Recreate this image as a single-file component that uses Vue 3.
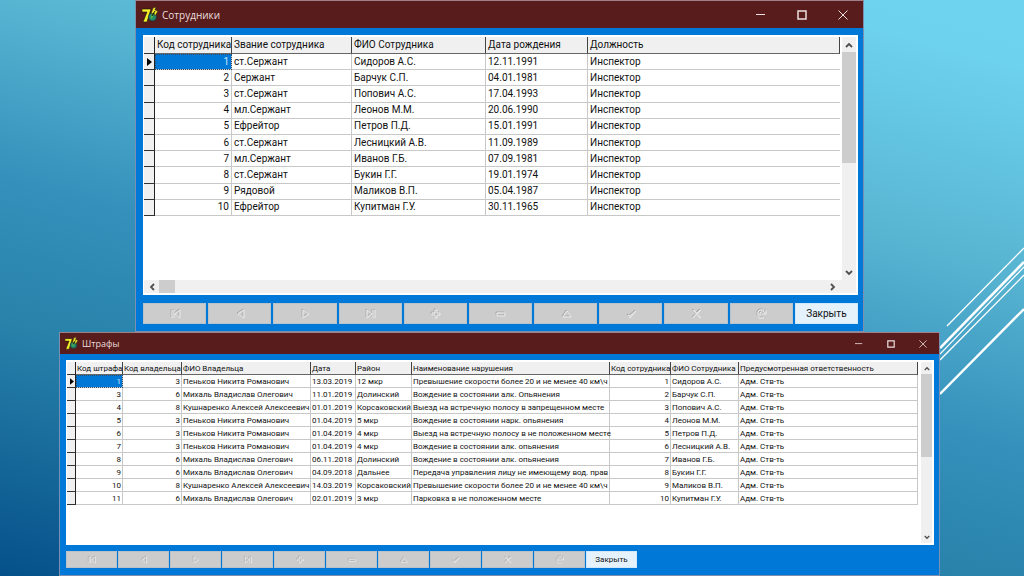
<script setup>
const navIcons = [
  { name: 'Первая запись', d: 'M3 1V9M5 1V9M11 1L6 5L11 9Z' },
  { name: 'Предыдущая запись', d: 'M10 1L4 5L10 9Z' },
  { name: 'Следующая запись', d: 'M4 1L10 5L4 9Z' },
  { name: 'Последняя запись', d: 'M3 1L8 5L3 9ZM9 1V9M11 1V9' },
  { name: 'Добавить', d: 'M6 1H8V4H11V6H8V9H6V6H3V4H6Z' },
  { name: 'Удалить', d: 'M3 4H11V7H3Z' },
  { name: 'Изменить', d: 'M7 2L11 8H3Z' },
  { name: 'Сохранить', d: 'M3 6L5 9L11 2L5 7Z' },
  { name: 'Отменить', d: 'M3 1L10 9M4 1L11 9M10 1L3 9M11 1L7 5' },
  { name: 'Обновить', d: 'M9 9H4L3 7V3L5 1H9M11 1V5H7M11 5L8 2M5 7V4L7 3' },
]

const ranks = [
  ['1', 'ст.Сержант', 'Сидоров А.С.', '12.11.1991', 'Инспектор'],
  ['2', 'Сержант', 'Барчук С.П.', '04.01.1981', 'Инспектор'],
  ['3', 'ст.Сержант', 'Попович А.С.', '17.04.1993', 'Инспектор'],
  ['4', 'мл.Сержант', 'Леонов М.М.', '20.06.1990', 'Инспектор'],
  ['5', 'Ефрейтор', 'Петров П.Д.', '15.01.1991', 'Инспектор'],
  ['6', 'ст.Сержант', 'Лесницкий А.В.', '11.09.1989', 'Инспектор'],
  ['7', 'мл.Сержант', 'Иванов Г.Б.', '07.09.1981', 'Инспектор'],
  ['8', 'ст.Сержант', 'Букин Г.Г.', '19.01.1974', 'Инспектор'],
  ['9', 'Рядовой', 'Маликов В.П.', '05.04.1987', 'Инспектор'],
  ['10', 'Ефрейтор', 'Купитман Г.У.', '30.11.1965', 'Инспектор'],
]

const penkov = 'Пеньков Никита Романович'
const mikhal = 'Михаль Владислав Олегович'
const kushnarenko = 'Кушнаренко Алексей Алексеевич'
const liability = 'Адм. Ств-ть'
const fines = [
  ['1', '3', penkov, '13.03.2019', '12 мкр', 'Превышение скорости более 20 и не менее 40 км\\ч', '1', 'Сидоров А.С.', liability],
  ['3', '6', mikhal, '11.01.2019', 'Долинский', 'Вождение в состоянии алк. Опьянения', '2', 'Барчук С.П.', liability],
  ['4', '8', kushnarenko, '01.01.2019', 'Корсаковский', 'Выезд на встречную полосу в запрещенном месте', '3', 'Попович А.С.', liability],
  ['5', '3', penkov, '01.04.2019', '5 мкр', 'Вождение в состоянии нарк. опьянения', '4', 'Леонов М.М.', liability],
  ['6', '3', penkov, '01.04.2019', '4 мкр', 'Выезд на встречную полосу в не положенном месте', '5', 'Петров П.Д.', liability],
  ['7', '3', penkov, '01.04.2019', '4 мкр', 'Вождение в состоянии алк. опьянения', '6', 'Лесницкий А.В.', liability],
  ['8', '6', mikhal, '06.11.2018', 'Долинский', 'Вождение в состоянии алк. опьянения', '7', 'Иванов Г.Б.', liability],
  ['9', '6', mikhal, '04.09.2018', 'Дальнее', 'Передача управления лицу не имеющему вод. прав', '8', 'Букин Г.Г.', liability],
  ['10', '8', kushnarenko, '14.03.2019', 'Корсаковский', 'Превышение скорости более 20 и не менее 40 км\\ч', '9', 'Маликов В.П.', liability],
  ['11', '6', mikhal, '02.01.2019', '3 мкр', 'Парковка в не положенном месте', '10', 'Купитман Г.У.', liability],
]

const windows = [
  {
    id: 'staff',
    title: 'Сотрудники',
    heads: ['Код сотрудника', 'Звание сотрудника', 'ФИО Сотрудника', 'Дата рождения', 'Должность'],
    numeric: [0],
    rows: ranks,
    horizontal: true,
  },
  {
    id: 'fines',
    title: 'Штрафы',
    heads: ['Код штрафа', 'Код владельца', 'ФИО Владельца', 'Дата', 'Район', 'Наименование нарушения', 'Код сотрудника', 'ФИО Сотрудника', 'Предусмотренная ответственность'],
    numeric: [0, 1, 6],
    rows: fines,
    horizontal: false,
  },
]
</script>

<template>
  <main class="desktop">
    <svg class="rays" viewBox="0 0 84 150" aria-hidden="true">
      <g fill="none" stroke="#fff">
        <path d="M84 3L7 81" stroke-width="1.3" />
        <path d="M84 17L0 103" stroke-width="2.6" />
        <path d="M84 22L0 109" stroke-width="1.2" />
        <path d="M84 30L0 115" stroke-width="1.3" />
        <path d="M84 64L0 149" stroke-width="2.4" />
      </g>
    </svg>

    <section v-for="w in windows" :key="w.id" class="window" :class="w.id">
      <header class="titlebar">
        <svg class="logo" viewBox="0 0 16 16" aria-hidden="true">
          <path d="M0 2H9L8 5L5 15H1L5 5H0Z" fill="#f5ef2a" stroke="#16160a" stroke-width=".6" />
          <circle cx="10.5" cy="10" r="4" fill="#268b68" stroke="#123" stroke-width=".6" />
          <path d="M9 8L11 7L11 10L9 12Z" fill="#58b648" />
          <path d="M9 7L11 1L14 0L13 3L16 4L13 9L12 6Z" fill="#f1e92c" stroke="#20200b" stroke-width=".5" />
          <path d="M10 9L13 4" stroke="#111" stroke-width="1" />
        </svg>
        <h1>{{ w.title }}</h1>
        <div class="controls">
          <button type="button" aria-label="Свернуть"><svg viewBox="0 0 10 10"><path d="M0 4.5H9" /></svg></button>
          <button type="button" aria-label="Развернуть"><svg viewBox="0 0 10 10"><path class="bold" d="M1 1H9V9H1Z" /></svg></button>
          <button type="button" aria-label="Закрыть окно"><svg viewBox="0 0 10 10"><path d="M.5.5L9.5 9.5M9.5.5L.5 9.5" /></svg></button>
        </div>
      </header>

      <div class="client">
        <div class="grid">
          <div class="body">
            <div class="sheet">
              <table>
                <colgroup>
                  <col class="mark" />
                  <col v-for="(h, i) in w.heads" :key="h" :class="'c' + i" />
                </colgroup>
                <thead>
                  <tr>
                    <td class="marker"></td>
                    <th v-for="h in w.heads" :key="h" scope="col">{{ h }}</th>
                  </tr>
                </thead>
                <tbody>
                  <tr v-for="(row, r) in w.rows" :key="row[0]">
                    <td class="marker">
                      <svg v-if="r === 0" viewBox="0 0 5 8" aria-hidden="true"><path d="M0 0L5 4L0 8Z" /></svg>
                    </td>
                    <td
                      v-for="(cell, c) in row"
                      :key="c"
                      :class="{ num: w.numeric.includes(c), selected: r === 0 && c === 0 }"
                    >{{ cell }}</td>
                  </tr>
                </tbody>
              </table>
            </div>
            <div class="vbar">
              <button type="button" aria-label="Вверх"><svg viewBox="0 0 8 6"><path d="M1 5L4 2L7 5" /></svg></button>
              <span class="thumb"></span>
              <button type="button" class="end" aria-label="Вниз"><svg viewBox="0 0 8 6"><path d="M1 1L4 4L7 1" /></svg></button>
            </div>
          </div>
          <div v-if="w.horizontal" class="hbar">
            <button type="button" aria-label="Влево"><svg viewBox="0 0 6 8"><path d="M5 1L2 4L5 7" /></svg></button>
            <span class="thumb"></span>
            <button type="button" class="end" aria-label="Вправо"><svg viewBox="0 0 6 8"><path d="M1 1L4 4L1 7" /></svg></button>
          </div>
        </div>

        <nav class="navigator">
          <button v-for="icon in navIcons" :key="icon.name" type="button" class="nav" :aria-label="icon.name" disabled>
            <svg viewBox="0 0 14 11">
              <path class="shade" :d="icon.d" />
              <path class="light" :d="icon.d" transform="translate(1 1)" />
            </svg>
          </button>
          <button type="button" class="close">Закрыть</button>
        </nav>
      </div>
    </section>
  </main>
</template>

<style>
body {
  background: #247aa8;
}
</style>

<style scoped>
* {
  box-sizing: border-box;
}
.desktop {
  position: relative;
  display: flex;
  flex-direction: column;
  min-height: 100vh;
  background: linear-gradient(195deg, #6dd3ef 0%, #6dd2ee 8%, #58b5d2 32%, #3590bb 53%, #2882aa 70%, #05508a 100%);
  font-family: Roboto, "Liberation Sans", Arial, sans-serif;
  color: #111;
}
.rays {
  position: absolute;
  right: 0;
  top: 245px;
  width: 84px;
  height: 150px;
}
.window {
  position: relative;
  display: flex;
  flex-direction: column;
  border: 1px solid #7d8fae;
  border-top-color: #a08088;
  background: #0078d7;
}
.staff {
  margin: 0 160px 0 135px;
  font-size: 10px;
}
.fines {
  flex: 1;
  margin: 0 84px 0 59px;
  font-size: 8px;
}
.titlebar {
  display: flex;
  align-items: center;
  background: #581c1c;
  color: #eadede;
}
.staff .titlebar {
  height: 27px;
  padding: 0 15px 0 6px;
}
.fines .titlebar {
  height: 21px;
  padding: 0 12px 0 5px;
}
.logo {
  width: 16px;
  height: 16px;
}
.fines .logo {
  width: 13px;
  height: 13px;
}
h1 {
  margin: 0 auto 0 4px;
  font: 400 10px "Open Sans", "Noto Sans", sans-serif;
}
.fines h1 {
  font-size: 9px;
}
button {
  display: flex;
  align-items: center;
  justify-content: center;
  margin: 0;
  padding: 0;
  border: 0;
  background: none;
  font: inherit;
  color: inherit;
}
.controls {
  display: flex;
  gap: 31px;
}
.fines .controls {
  gap: 24px;
}
.controls svg {
  display: block;
  width: 10px;
  height: 10px;
  fill: none;
  stroke: #eedede;
}
.fines .controls svg {
  width: 8px;
  height: 8px;
}
.controls .bold {
  stroke-width: 1.5;
}
.client {
  padding: 7px 5px 7px 7px;
}
.fines .client {
  padding: 6px 5px 6px 6px;
}
.grid {
  padding: 2px 2px 2px 1px;
  background: #fff;
}
.body {
  display: flex;
}
.sheet {
  flex: 1;
  min-width: 0;
  padding-right: 2px;
}
.fines .sheet {
  padding-right: 3px;
}
.staff .body {
  height: 243px;
}
.fines .body {
  height: 181px;
}
table {
  width: 100%;
  table-layout: fixed;
  border-collapse: separate;
  border-spacing: 0;
}
.staff table {
  height: 179px;
}
.fines table {
  height: 143px;
}
thead tr {
  height: 17px;
}
.fines thead tr {
  height: 13px;
}
.staff .mark { width: 11px; }
.staff .c0 { width: 77px; }
.staff .c1 { width: 120px; }
.staff .c2 { width: 134px; }
.staff .c3 { width: 102px; }
.fines .mark { width: 9px; }
.fines .c0 { width: 47px; }
.fines .c1 { width: 59px; }
.fines .c2 { width: 129px; }
.fines .c3 { width: 45px; }
.fines .c4 { width: 56px; }
.fines .c5 { width: 198px; }
.fines .c6 { width: 61px; }
.fines .c7 { width: 68px; }
th,
td {
  overflow: hidden;
  padding: 0 2px;
  border-right: 1px solid #c8c8c8;
  border-bottom: 1px solid #c8c8c8;
  font-weight: 400;
  line-height: 12px;
  text-align: left;
  white-space: nowrap;
}
.fines th,
.fines td {
  overflow: visible;
  padding: 0 1px;
  line-height: 11px;
}
.staff td:last-child {
  border-right: 0;
}
th {
  border-right-color: #444;
  border-bottom-color: #666;
  background: #f0f0f0;
}
.fines .num,
.staff .num {
  text-align: right;
}
.selected {
  background: #0078d7;
  color: #c9e6fb;
  outline: 1px dotted #2a4e6c;
  outline-offset: -1px;
}
.staff td.marker,
.fines td.marker {
  padding: 0 0 0 3px;
  border-right-color: #222;
  border-bottom-color: #333;
  background: #f0f0f0;
}
.marker svg {
  display: block;
  width: 5px;
  height: 8px;
}
.fines .marker svg {
  width: 4px;
  height: 7px;
}
.vbar,
.hbar {
  display: flex;
  background: #f0f0f0;
}
.vbar {
  flex-direction: column;
  width: 14px;
}
.fines .vbar {
  width: 11px;
}
.vbar button,
.vbar .thumb {
  width: 100%;
}
.vbar button {
  height: 15px;
}
.fines .vbar button {
  height: 12px;
}
.vbar .thumb {
  height: 111px;
}
.fines .vbar .thumb {
  height: 83px;
}
.thumb {
  background: #cdcdcd;
}
.vbar .end {
  margin-top: auto;
}
.vbar svg {
  width: 8px;
  height: 6px;
}
.fines .vbar svg {
  width: 6px;
  height: 5px;
}
.vbar svg,
.hbar svg {
  fill: none;
  stroke: #505050;
  stroke-width: 1.8;
}
.hbar {
  height: 13px;
  padding-right: 16px;
}
.hbar button {
  width: 15px;
}
.hbar svg {
  width: 6px;
  height: 8px;
}
.hbar .thumb {
  width: 16px;
}
.hbar .end {
  margin-left: auto;
}
.navigator {
  display: grid;
  grid-template-columns: repeat(11, 1fr);
  gap: 2px;
  margin-top: 8px;
}
.staff .navigator {
  height: 21px;
}
.fines .navigator {
  grid-template-columns: repeat(11, 51px);
  gap: 1px;
  height: 17px;
  margin-top: 6px;
}
.nav {
  border: 1px solid #b9c3cc;
  background: #ccc;
}
.nav svg {
  width: 14px;
  height: 11px;
  fill: none;
}
.fines .nav svg {
  width: 11px;
  height: 9px;
}
.shade {
  stroke: #aaa;
}
.light {
  stroke: #ececec;
}
.close {
  border: 1px solid #d0e8fb;
  background: #e5f1fb;
}
</style>
